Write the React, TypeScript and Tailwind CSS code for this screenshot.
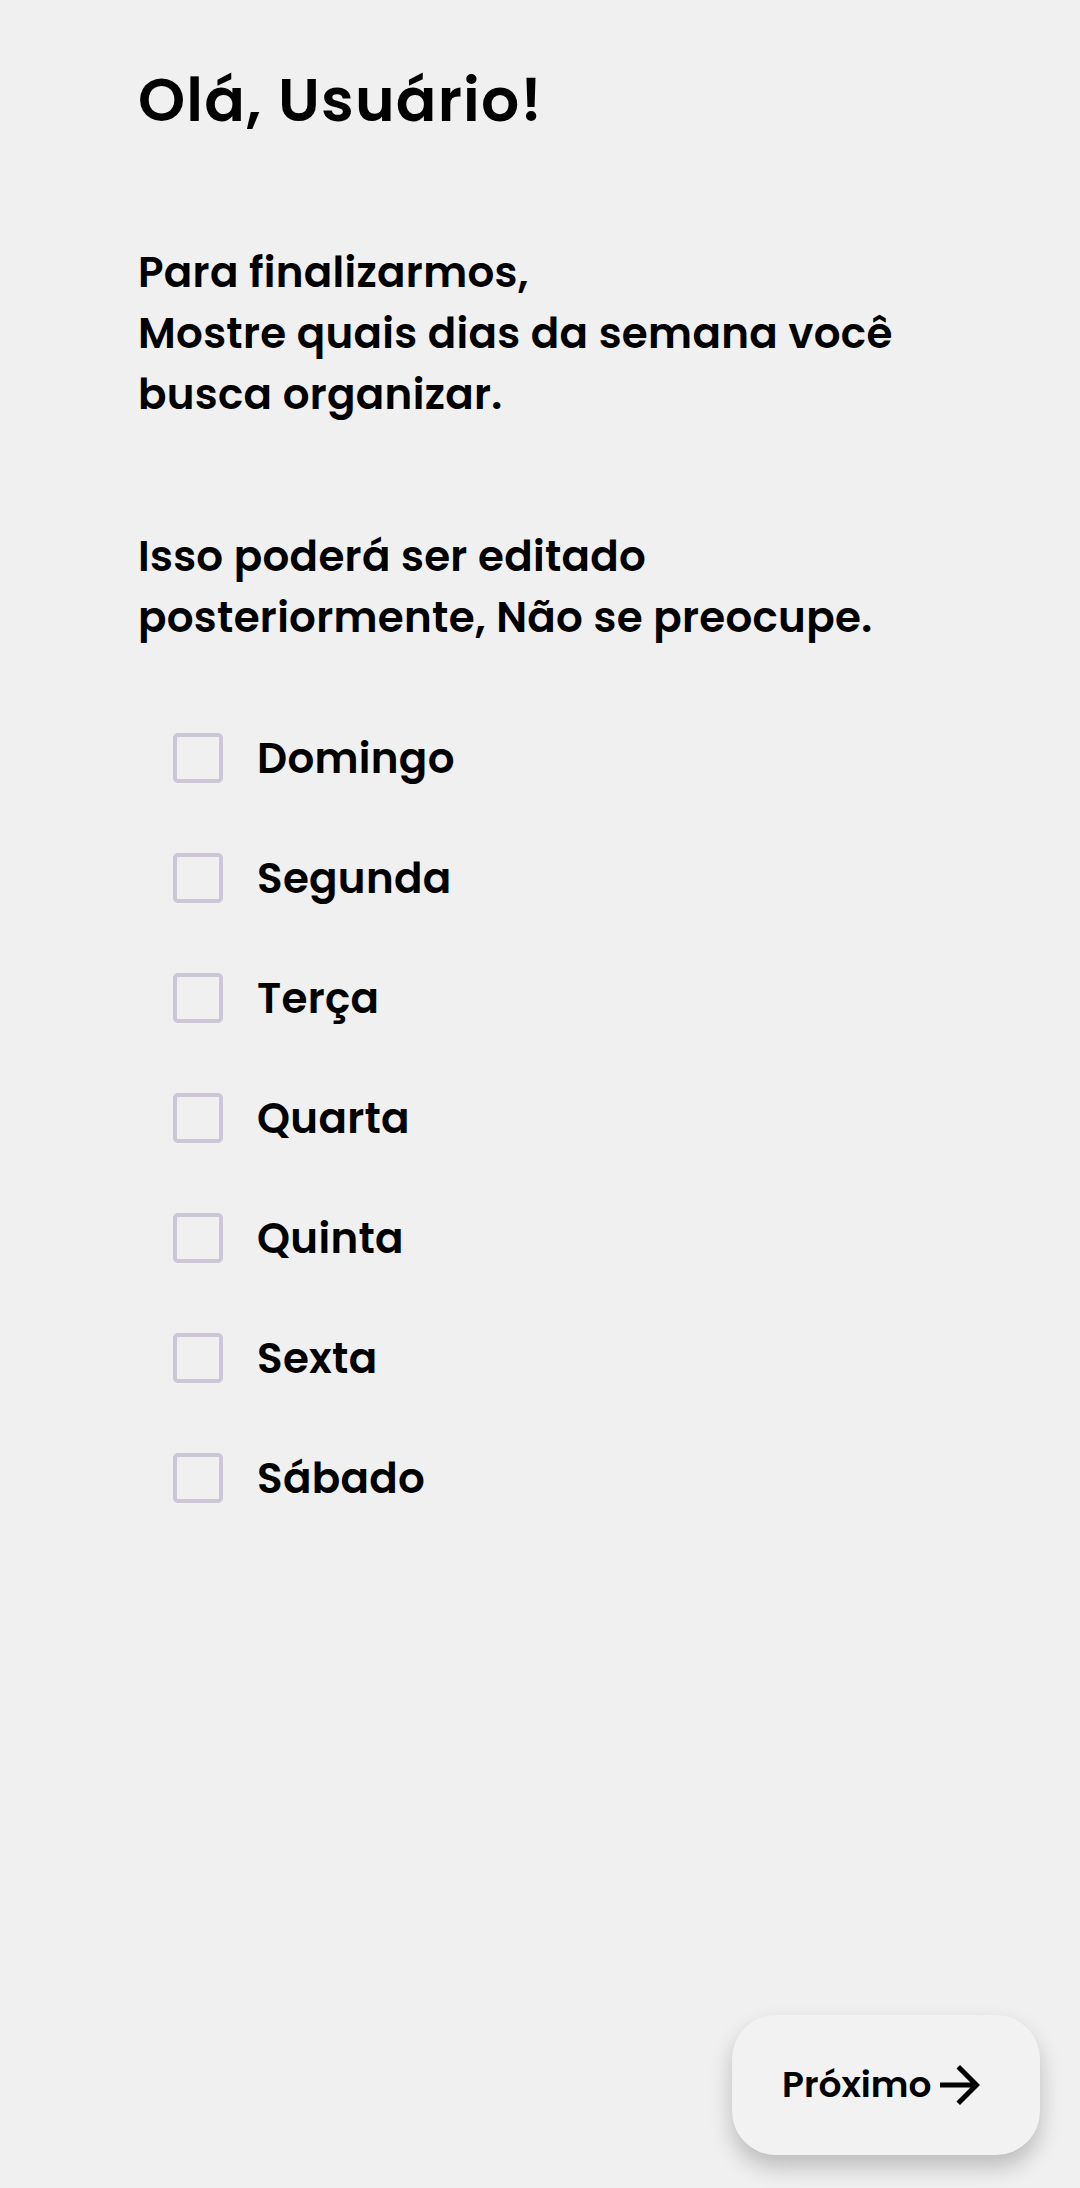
import { useState } from "react";

const days = ["Domingo", "Segunda", "Terça", "Quarta", "Quinta", "Sexta", "Sábado"];

export default function App() {
  const [checked, setChecked] = useState<string[]>([]);

  const toggle = (day: string) =>
    setChecked((prev) => (prev.includes(day) ? prev.filter((d) => d !== day) : [...prev, day]));

  return (
    <div className="min-h-[2188px] flex flex-col bg-[#f0f0f0] text-black font-['Poppins','Inter',sans-serif]">
      <div className="pl-[138px] pr-[40px]">
        {/* Title */}
        <h1 className="pt-[64px] text-[60px] leading-[72px] font-semibold tracking-[1.2px]">Olá, Usuário!</h1>

        {/* Intro */}
        <p className="mt-[106px] max-w-[810px] text-[42px] leading-[61px] font-semibold tracking-[0.3px]">
          Para finalizarmos,
          <br />
          Mostre quais dias da semana você busca organizar.
        </p>

        <p className="mt-[101px] max-w-[810px] text-[42px] leading-[61px] font-semibold tracking-[0.3px]">
          Isso poderá ser editado posteriormente, Não se preocupe.
        </p>

        {/* Days */}
        <ul className="mt-[50px] pl-[35px]">
          {days.map((day) => (
            <li key={day} className="h-[120px] flex items-center gap-[34px]">
              <button
                onClick={() => toggle(day)}
                className={`w-[50px] h-[50px] rounded-[5px] border-[4px] border-[#cdc6d6] ${
                  checked.includes(day) ? "bg-[#cdc6d6]" : "bg-transparent"
                }`}
              />
              <span className="text-[42px] leading-[61px] font-semibold tracking-[0.3px]">{day}</span>
            </li>
          ))}
        </ul>
      </div>

      <div className="flex-1" />

      {/* Next button */}
      <div className="flex justify-end pr-[40px] pb-[33px]">
        <button className="w-[308px] h-[140px] rounded-[44px] bg-[#f2f2f2] shadow-[0_12px_22px_rgba(0,0,0,0.22)] flex items-center pl-[50px] gap-[8px]">
          <span className="text-[36px] leading-[44px] font-semibold">Próximo</span>
          <svg width="40" height="40" viewBox="4 4 16 16" fill="currentColor">
            <path d="M12 4l-1.41 1.41L16.17 11H4v2h12.17l-5.58 5.59L12 20l8-8z" />
          </svg>
        </button>
      </div>
    </div>
  );
}
